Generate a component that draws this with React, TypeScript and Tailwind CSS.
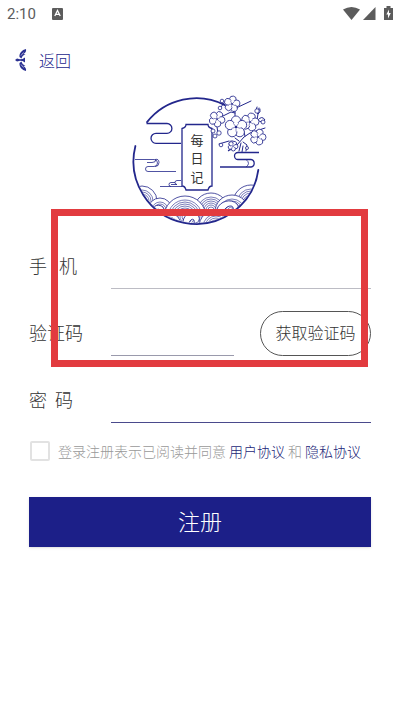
import React from 'react';

const INK = '#23278c';

function Flower({ x, y, r, turn = 0 }: { x: number; y: number; r: number; turn?: number }) {
  const petals = [0, 72, 144, 216, 288];
  return (
    <g transform={`translate(${x} ${y}) rotate(${turn})`} stroke={INK} strokeWidth={0.8} fill="#fff">
      {petals.map((a) => (
        <circle key={a} cx={0} cy={-r * 0.58} r={r * 0.42} transform={`rotate(${a})`} />
      ))}
      <circle r={r * 0.42} stroke="none" />
      {petals.map((a) => (
        <path key={a} d={`M0 ${-r * 0.12}V${-r * 0.42}`} strokeWidth={0.5} transform={`rotate(${a + 36})`} />
      ))}
      <circle r={r * 0.12} fill={INK} stroke="none" />
    </g>
  );
}

function Wave({ x, y, r }: { x: number; y: number; r: number }) {
  const rings: number[] = [];
  for (let k = r - 4; k > 1; k -= 2) rings.push(k);
  return (
    <g stroke={INK} fill="none">
      <circle cx={x} cy={y} r={r} fill="#fff" strokeWidth={0.8} />
      {rings.map((k) => (
        <circle key={k} cx={x} cy={y} r={k} strokeWidth={0.6} />
      ))}
    </g>
  );
}

function Logo() {
  return (
    <svg width="144" height="136" viewBox="128 92 144 136" role="img" aria-label="每日记" fill="none">
      <defs>
        <clipPath id="disc">
          <circle cx="196.300" cy="160.800" r="62" />
        </clipPath>
      </defs>
      <g clipPath="url(#disc)">
        <Wave x={142} y={201} r={15} />
        <Wave x={251} y={203} r={18} />
        <Wave x={211} y={210} r={17} />
        <Wave x={160} y={210} r={12} />
        <Wave x={232} y={212} r={17} />
        <Wave x={185} y={217} r={21} />
        <Wave x={169} y={225} r={12} />
        <Wave x={216} y={227} r={17} />
        <path
          d="M217 209c3-8 14-11 20-5 3 4 0 7-4 5 1-4-5-4-8 0-2 3-5 3-8 0ZM183 224c-1-7 6-14 13-10 6 3 3 10-2 9 1-4-2-5-4-2s0 4-7 3ZM152 209c3-5 10-5 12 0 1 3-3 4-4 1-2-2-4 1-8-1Z"
          fill="#fff"
          stroke={INK}
          strokeWidth="0.900"
        />
      </g>
      <g stroke={INK} strokeWidth="1.8" strokeLinecap="round">
        <path d="M147 122.100A62.700 62.700 0 0 1 225 105.100" />
        <path d="M135.400 146A62.700 62.700 0 1 0 258.300 170" />
      </g>
      <g stroke={INK} strokeWidth="1.3">
        <path d="M146.500 123.500H167a4.900 4.900 0 0 1 0 9.800H156a5 5 0 0 0 0 10h25" />
        <path d="M259 152.500H238a3.500 3.500 0 0 0 0 7H251a3.800 3.800 0 0 1 0 7.500H220" />
      </g>
      <g stroke={INK} strokeWidth="0.8">
        <path d="M246 159.500q5 4 0 7.500" />
        <path d="M135 159.500H154a3.500 3.500 0 0 1 0 7H148a2.500 2.500 0 0 0 0 5H176M147 162.500h5q4 0 4-3M155 166.500q4 0 4-4t-4-3" />
        <path d="M181 180.500h-4a2 2 0 0 0 0 4h-6M160 186.500h22M171 186.500a2 2 0 0 1 0-4h4" />
      </g>
      <path d="M186 124.500H208q0 3 4 4V186q-3 0-4 4H186q-1-4-4-4V128.500q4-1 4-4Z" fill="#fff" stroke={INK} strokeWidth="1.3" />
      <g fill="#333" fontSize="13" fontWeight="400" textAnchor="middle" className="font-['Noto_Sans_CJK_SC',sans-serif]">
        <text x="197" y="145">每</text>
        <text x="197" y="163">日</text>
        <text x="197" y="182">记</text>
      </g>
      <g stroke={INK} strokeWidth="1" strokeLinecap="round" strokeLinejoin="round">
        <path d="M235 118l0-7-2-3M234 109l17-8M223 116l8-4 4 1M257 120l2-12M245 136l-2-8M265 128l-15 5-6 4-7 8M239 141l-4-3M243 142l4 3-1 6M241 143l-2 8M236 147l-8 4 5-6M229 141l-10 3" />
        <path d="M224 103l-3 4M257 107q-2 5 1 7 3-2 2-5M258 120q4-5 7 0-3 4-7 0M217 127l1 6M230 147q-3-7 3-6M243 146l-1 6" />
      </g>
      <Flower x={232} y={104} r={8} turn={10} />
      <Flower x={217} y={119} r={8} turn={30} />
      <Flower x={250} y={122} r={9} turn={15} />
      <Flower x={236} y={127} r={11} />
      <Flower x={258} y={137} r={8} turn={20} />
      <Flower x={233} y={146} r={5} turn={30} />
      <g fill="#fff" stroke={INK} strokeWidth="0.8">
        <circle cx="213" cy="131" r="2" />
        <circle cx="219" cy="133" r="2.200" />
        <circle cx="215" cy="136" r="2" />
        <circle cx="222" cy="101" r="1.800" />
        <circle cx="220" cy="108" r="1.800" />
        <circle cx="257" cy="111" r="2.200" />
        <circle cx="263" cy="122" r="2" />
        <circle cx="221" cy="145" r="1.800" />
        <circle cx="247" cy="148" r="1.500" />
      </g>
    </svg>
  );
}

function StatusBar() {
  return (
    <header className="flex h-7 items-center px-[7px] font-['Roboto',sans-serif] text-[15px] font-normal text-[#5c5c5c]">
      <span>2:10</span>
      <svg className="ml-4" width="11" height="12" viewBox="0 0 11 12" aria-hidden="true">
        <rect width="11" height="12" rx="1" fill="#5c5c5c" />
        <path d="M2.800 8 5.500 2.500 8.200 8M3.800 6.300h3.400" stroke="#fff" strokeWidth="1.300" fill="none" />
      </svg>
      <svg className="ml-auto" width="50" height="16" viewBox="0 0 50 16" fill="#5c5c5c" aria-hidden="true">
        <path d="M0 3.500Q8.500 -1.500 17 3.500L8.500 14Z" />
        <path d="M20 14H32.500V1Z" />
        <path d="M41 2h2.500V0h4v2H50v12h-9Z" />
        <path d="M46 3.500 43.300 8.500h1.700V12.500L47.800 7h-1.800Z" fill="#fff" />
      </svg>
    </header>
  );
}

function BackIcon() {
  return (
    <svg width="12" height="22" viewBox="0 0 12 22" fill="#2b3192" aria-hidden="true">
      <path d="M11 0C7 1 4 4 4.500 8L6.500 9.500C7 7 8.500 6 10.500 5.500L8.500 5C10.500 4 11.500 2 11 0Z" />
      <path d="M11 22C7 21 4 18 4.500 14L6.500 12.500C7 15 8.500 16 10.500 16.500L8.500 17C10.500 18 11.500 20 11 22Z" />
      <path d="M0 11 2 9.500 5 10.300 7.500 10 10 8.500V13.500L7.500 12 5 11.700 2 12.500Z" />
      <path d="M6 6.500 8.500 3.500M6 15.500 8.500 18.500" stroke="#fff" strokeWidth="0.600" />
    </svg>
  );
}

export default function App() {
  return (
    <div className="relative min-h-screen bg-white font-['Noto_Sans_CJK_SC',sans-serif] font-light text-[#333]">
      <StatusBar />
      <nav className="flex h-16 items-center px-[15px]">
        <button type="button" className="flex items-center gap-3 text-base text-[#23278c]">
          <BackIcon />
          返回
        </button>
      </nav>
      <main>
        <div className="flex justify-center">
          <Logo />
        </div>
        <form className="mt-4 px-[29px]" onSubmit={(e) => e.preventDefault()}>
          <div className="flex flex-col gap-[22px] text-lg">
            <div className="flex h-[45px] items-center">
              <label htmlFor="phone" className="w-[82px] shrink-0 pb-1 whitespace-pre">{'手   机'}</label>
              <input id="phone" type="tel" className="h-full min-w-0 flex-1 border-b border-[#bcbcc4] outline-none" />
            </div>
            <div className="flex h-[45px] items-center">
              <label htmlFor="code" className="w-[82px] shrink-0 pb-1">验证码</label>
              <input id="code" type="text" className="h-full min-w-0 flex-1 border-b border-[#9a9aac] outline-none" />
              <button type="button" className="ml-[26px] h-full w-[111px] shrink-0 rounded-full border border-[#555] pb-1 text-base">
                获取验证码
              </button>
            </div>
            <div className="flex h-[45px] items-center">
              <label htmlFor="password" className="w-[82px] shrink-0 pb-1 whitespace-pre">{'密  码'}</label>
              <input id="password" type="password" className="h-full min-w-0 flex-1 border-b border-[#4a4a8c] outline-none" />
            </div>
          </div>
          <div className="mt-[18px] flex h-5 items-center gap-2 text-sm text-[#999]">
            <input
              id="agree"
              type="checkbox"
              aria-label="同意"
              className="ml-px size-5 shrink-0 appearance-none rounded-xs border-2 border-[#e2e2e2] bg-white checked:bg-[#1c1f88]"
            />
            <div className="flex gap-[3px] whitespace-nowrap">
              <label htmlFor="agree">登录注册表示已阅读并同意</label>
              <a href="#terms" className="text-[#1c1f78]">用户协议</a>
              <span>和</span>
              <a href="#privacy" className="text-[#1c1f78]">隐私协议</a>
            </div>
          </div>
          <button type="submit" className="mt-9 h-[50px] w-full bg-[#1c1f88] pb-1 text-[22px] text-white shadow-sm">
            注册
          </button>
        </form>
      </main>
      <div className="pointer-events-none absolute top-[209px] right-8 left-[51px] h-[158px] border-7 border-[#e23b3f]" />
    </div>
  );
}
